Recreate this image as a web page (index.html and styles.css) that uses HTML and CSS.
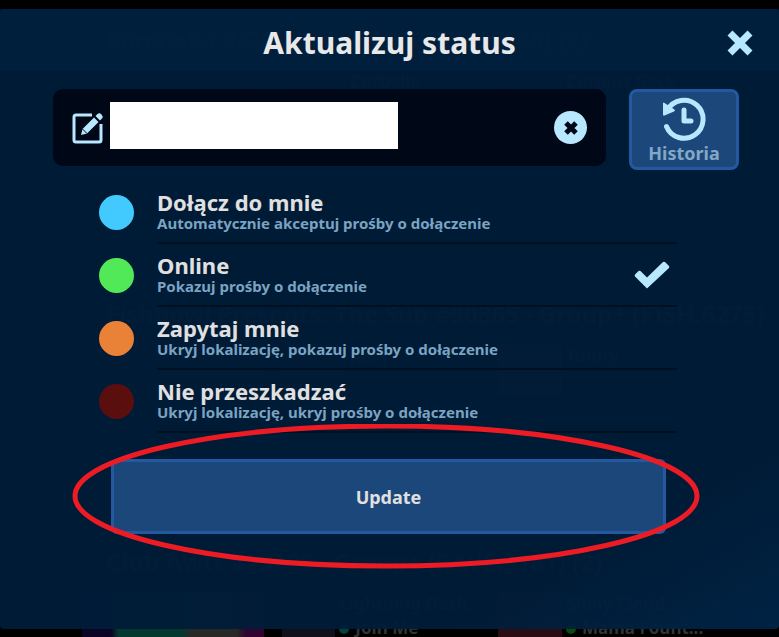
FILE: index.html
```html
<!DOCTYPE html>
<html lang="pl">
<head>
    <meta charset="UTF-8">
    <meta name="viewport" content="width=device-width, initial-scale=1.0">
    <title>Aktualizuj status</title>
    <link rel="stylesheet" href="styles.css">
</head>
<body>
    <!-- dimmed page behind the dialog -->
    <div class="backdrop" aria-hidden="true">
        <div class="group">
            <h2>Furchella 9/23 - Group+ (COFFEL.6845) (7)</h2>
            <div class="cards">
                <div class="card"><span class="thumb wide"></span></div>
                <div class="card"><span class="thumb"></span><p>Corbelle</p></div>
                <div class="card"><span class="thumb"></span><p>Curious Geck</p></div>
            </div>
        </div>
        <div class="group">
            <h2>Fishbowl Presents: The Sub #90865 - Group+ (FISH.6275)</h2>
            <div class="cards">
                <div class="card"><span class="thumb wide"></span></div>
                <div class="card"><span class="thumb"></span><p>Jawy</p></div>
                <div class="card"><span class="thumb red"></span><p>Tunity</p></div>
            </div>
        </div>
        <div class="group">
            <h2>Club Awtt #73195 - Group+ (RAVE.3181) (2)</h2>
            <div class="cards">
                <div class="card"><span class="thumb wide neon"></span></div>
                <div class="card"><span class="thumb"></span><p>Lightning Dash...<br><i class="teal"></i>Join Me</p></div>
                <div class="card"><span class="thumb red"></span><p>Shiny Cloud<br><i></i>Mama Fount...</p></div>
            </div>
        </div>
    </div>

    <form class="modal">
        <header class="modal-header">
            <h1>Aktualizuj status</h1>
            <button type="button" class="close" aria-label="Zamknij">
                <svg width="26" height="26" viewBox="0 0 26 26"><path d="M3 3L23 23M23 3L3 23" stroke="currentColor" stroke-width="7"/></svg>
            </button>
        </header>

        <div class="status-row">
            <div class="status-field">
                <svg class="edit" width="32" height="32" viewBox="0 0 32 32">
                    <path d="M20 3H4Q2 3 2 5V28Q2 30 4 30H27Q29 30 29 28V12" fill="none" stroke="currentColor" stroke-width="3"/>
                    <path d="M9 23L10.500 17L22 5.500L26.500 10L15 21.500Z M23.500 4L25.500 2Q27.500 .500 29.500 2.500Q31.500 4.500 30 6.500L28 8.500Z" fill="currentColor"/>
                    <path d="M10.500 17L15 21.500" stroke="#000717" stroke-width="1"/>
                </svg>
                <input type="text" class="status-text" aria-label="Status">
                <button type="button" class="clear" aria-label="Wyczyść">
                    <svg width="16" height="16" viewBox="0 0 16 16"><path d="M3 3L13 13M13 3L3 13" stroke="currentColor" stroke-width="5"/></svg>
                </button>
            </div>
            <button type="button" class="history">
                <svg width="44" height="44" viewBox="0 0 44 44">
                    <path d="M5.500 13A19 19 0 1 1 4.500 29.500" fill="none" stroke="currentColor" stroke-width="5" stroke-linecap="round"/>
                    <path d="M1 6.500Q1 5 2.500 6L12.500 12.500Q13.500 14 12 14.500L2.500 18.500Q1 19 1 17.500Z" fill="currentColor"/>
                    <path d="M22 13V24H29" fill="none" stroke="currentColor" stroke-width="5" stroke-linecap="round" stroke-linejoin="round"/>
                </svg>
                <span>Historia</span>
            </button>
        </div>

        <div class="options">
            <label class="option">
                <input type="radio" name="status" class="join">
                <span class="text"><b>Dołącz do mnie</b><small>Automatycznie akceptuj prośby o dołączenie</small></span>
            </label>
            <label class="option">
                <input type="radio" name="status" class="online" checked>
                <span class="text"><b>Online</b><small>Pokazuj prośby o dołączenie</small></span>
                <svg class="check" width="36" height="28" viewBox="0 0 36 28"><path d="M13 27.500L1 15.500Q.300 14.500 1 13.500L4.500 10Q5.500 9.500 6.500 10L13 16.500L29 1Q30 .300 31 1L35 5Q35.500 6 35 7Z" fill="currentColor"/></svg>
            </label>
            <label class="option">
                <input type="radio" name="status" class="ask">
                <span class="text"><b>Zapytaj mnie</b><small>Ukryj lokalizację, pokazuj prośby o dołączenie</small></span>
            </label>
            <label class="option">
                <input type="radio" name="status" class="busy">
                <span class="text"><b>Nie przeszkadzać</b><small>Ukryj lokalizację, ukryj prośby o dołączenie</small></span>
            </label>
        </div>

        <div class="actions">
            <button type="submit" class="update">Update</button>
            <svg class="marker" viewBox="0 0 628 145" preserveAspectRatio="none"><ellipse cx="314" cy="72" rx="311" ry="70" fill="none" stroke="#ed1c24" stroke-width="5"/></svg>
        </div>
    </form>
</body>
</html>
```
FILE: styles.css
```css
* {
    box-sizing: border-box;
}
body {
    margin: 0;
    min-height: 100vh;
    padding: 9px 0 8px;
    display: flex;
    flex-direction: column;
    position: relative;
    background: #000;
    font-family: "Noto Sans", sans-serif;
    font-weight: bold;
    color: #e0e0e0;
}
button {
    font: inherit;
    padding: 0;
    border: none;
    cursor: pointer;
}
svg {
    display: block;
}

/* page behind */
.backdrop {
    position: absolute;
    inset: 0;
    overflow: hidden;
    padding-top: 24px;
    color: #333;
}
.group {
    height: 274px;
    padding-left: 82px;
}
.group + .group + .group {
    margin-top: -26px;
}
.backdrop h2 {
    margin: 0 0 14px 24px;
    font-size: 24px;
    line-height: 32px;
    white-space: nowrap;
}
.cards {
    display: grid;
    grid-template-columns: 184px 200px 1fr;
    gap: 16px;
}
.card {
    display: flex;
    gap: 4px;
}
.card p {
    margin: 0;
    font-size: 17px;
    line-height: 24px;
    white-space: nowrap;
}
.card i {
    display: inline-block;
    width: 10px;
    height: 10px;
    margin-right: 6px;
    border-radius: 50%;
    background: #0c4a0c;
}
.card i.teal {
    background: #06403c;
}
.thumb {
    width: 64px;
    height: 52px;
    background: #10101c;
}
.thumb.wide {
    width: 182px;
}
.thumb.red {
    background: #2a0c14;
}
.thumb.neon {
    background: linear-gradient(90deg, #0c0424 16%, #043830 20%, #043830 55%, #282828 60%, #282828 85%, #300430 90%);
}

/* dialog */
.modal {
    position: relative;
    flex: 1;
    border-radius: 4px;
    background: linear-gradient(150deg, rgba(0, 28, 56, .96) 82%, rgba(0, 36, 70, .96));
}
.modal-header {
    display: grid;
    grid-template-columns: 26px 1fr 26px;
    align-items: center;
    height: 62px;
    padding: 6px 26px 0;
    background: rgba(0, 36, 68, .5);
}
.modal-header h1 {
    grid-column: 2;
    margin: 0;
    font-size: 30px;
    line-height: 40px;
    text-align: center;
    color: #e8e8e8;
}
.close {
    background: none;
    color: #b8e8ff;
}
.status-row {
    display: flex;
    align-items: flex-start;
    gap: 23px;
    padding: 18px 40px 0 53px;
}
.status-field {
    flex: 1;
    display: flex;
    align-items: center;
    height: 77px;
    padding: 0 19px;
    border-radius: 10px;
    background: #000717;
    color: #b8e8ff;
}
.status-text {
    width: 56%;
    height: 47px;
    margin: 0 0 4px 6px;
    padding: 0 10px;
    border: none;
    background: #fff;
    font: inherit;
}
.clear {
    display: grid;
    place-items: center;
    width: 33px;
    height: 33px;
    margin-left: auto;
    border-radius: 50%;
    background: #b8e8ff;
    color: #000717;
}
.history {
    display: flex;
    flex-direction: column;
    align-items: center;
    width: 110px;
    height: 81px;
    padding-top: 5px;
    border: 3px solid #2259a0;
    border-radius: 8px;
    background: #1c477b;
    color: #b8e8ff;
}
.history span {
    font-size: 18px;
    line-height: 24px;
    color: #82a8c6;
}

/* statuses */
.options {
    padding: 11px 102px 0 99px;
}
.option {
    position: relative;
    display: flex;
    gap: 23px;
    cursor: pointer;
}
.option input {
    appearance: none;
    flex: none;
    width: 35px;
    height: 35px;
    margin: 14px 0 0;
    border-radius: 50%;
}
.join {
    background: #42caff;
}
.online {
    background: #51e957;
}
.ask {
    background: #e98137;
}
.busy {
    background: #5b0e0e;
}
.text {
    flex: 1;
    height: 63px;
    padding-top: 8px;
    border-bottom: 2px solid #00101f;
}
.text b,
.text small {
    display: block;
}
.text b {
    font-size: 22px;
    font-weight: bold;
    line-height: 26px;
}
.text small {
    font-size: 15px;
    line-height: 17px;
    color: #7ba3c2;
}
.check {
    position: absolute;
    right: 7px;
    top: 17px;
    color: #b8e8ff;
}

.actions {
    position: relative;
    padding: 26px 113px 0 111px;
}
.update {
    width: 100%;
    height: 75px;
    border: 3px solid #2259a0;
    border-radius: 6px;
    background: #1c477b;
    font-size: 18px;
    color: #e0e0e0;
}
.marker {
    position: absolute;
    left: 72px;
    top: -9px;
    width: calc(100% - 151px);
    height: 145px;
    pointer-events: none;
}
```
